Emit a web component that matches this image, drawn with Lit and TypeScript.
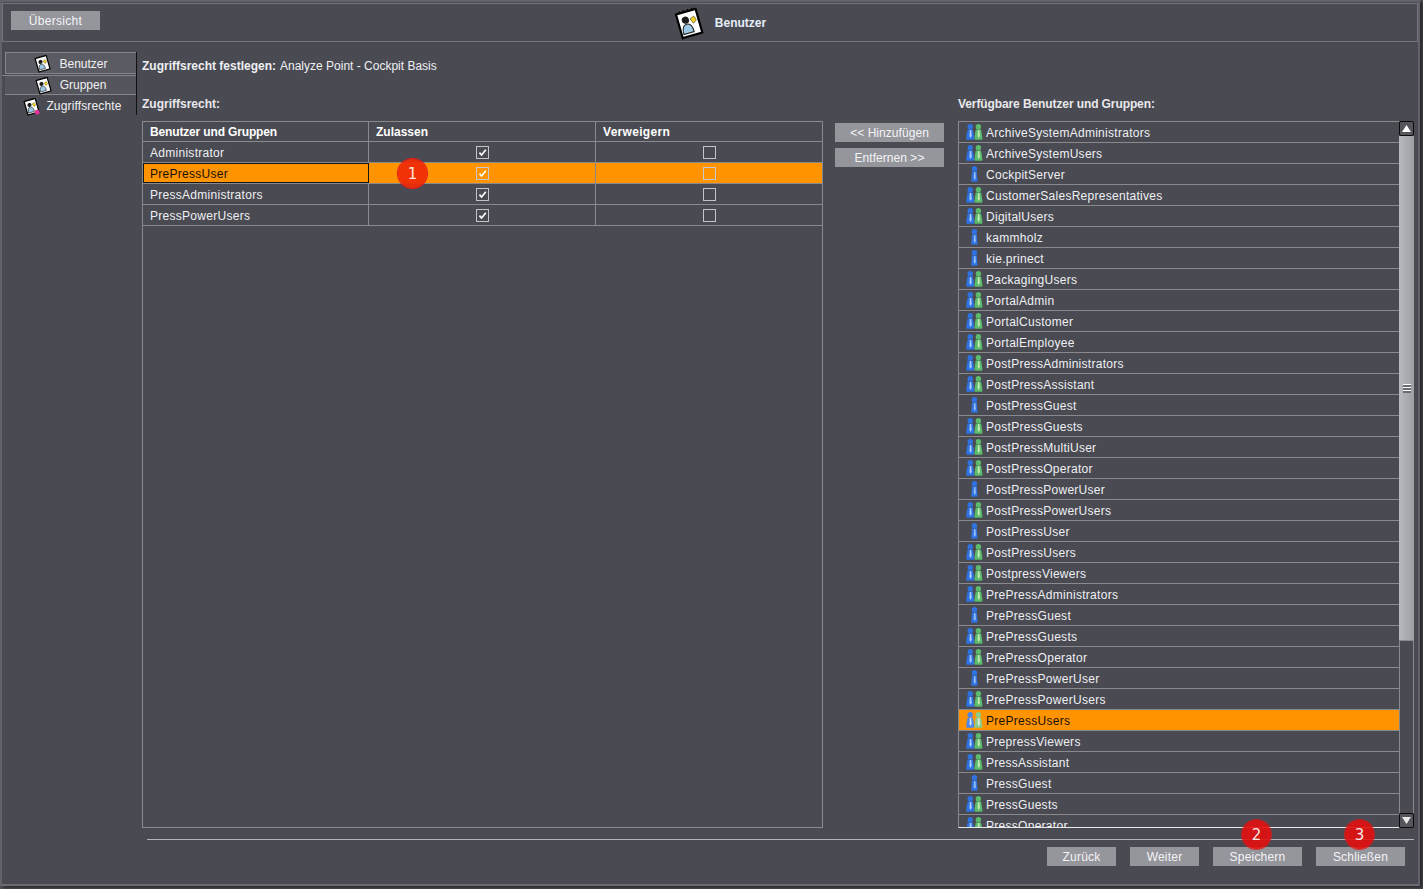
import { LitElement, html, css, svg } from "lit";
import { customElement } from "lit/decorators.js";

const G = "g", U = "u";
const ITEMS: [string, string][] = [
  ["ArchiveSystemAdministrators", G], ["ArchiveSystemUsers", G], ["CockpitServer", U],
  ["CustomerSalesRepresentatives", G], ["DigitalUsers", G], ["kammholz", U], ["kie.prinect", U],
  ["PackagingUsers", G], ["PortalAdmin", G], ["PortalCustomer", G], ["PortalEmployee", G],
  ["PostPressAdministrators", G], ["PostPressAssistant", G], ["PostPressGuest", U],
  ["PostPressGuests", G], ["PostPressMultiUser", G], ["PostPressOperator", G],
  ["PostPressPowerUser", U], ["PostPressPowerUsers", G], ["PostPressUser", U],
  ["PostPressUsers", G], ["PostpressViewers", G], ["PrePressAdministrators", G],
  ["PrePressGuest", U], ["PrePressGuests", G], ["PrePressOperator", G], ["PrePressPowerUser", U],
  ["PrePressPowerUsers", G], ["PrePressUsers", G], ["PrepressViewers", G], ["PressAssistant", G],
  ["PressGuest", U], ["PressGuests", G], ["PressOperator", G],
];

const pawn = (x: number, fill: string, light: string, w = 4) => svg`
  <circle cx=${x} cy="2.8" r="2.7" fill=${fill}/>
  <path d="M${x - 2.6} 5.4 H${x + 2.6} L${x + w - 0.5} 10 L${x + w} 14.4 Q${x + w} 15.8 ${x + w - 1} 15.8 H${x - w + 1} Q${x - w} 15.8 ${x - w} 14.4 L${x - w + 0.5} 10 Z" fill=${fill}/>
  <path d="M${x - 0.3} 6 H${x + 1} L${x + 1.5} 12 L${x + 0.4} 14 L${x - 0.8} 12 Z" fill=${light}/>`;

const groupIcon = (sel: boolean) => html`<svg class="li" width="17" height="16" viewBox="0 0 17 16">
  ${pawn(4.2, sel ? "#4d86e6" : "#2f72e2", sel ? "#cfe0f8" : "#a9cdf8")}
  ${pawn(12.4, sel ? "#8ccb8c" : "#5cbb6c", sel ? "#e2f1d0" : "#c4e8b4")}
</svg>`;
const userIcon = () => html`<svg class="li" width="17" height="16" viewBox="0 0 17 16">${pawn(8.4, "#2f72e2", "#8fbcf5", 3.2)}</svg>`;

const notepad = (size: number, dot = false) => html`<svg class="np" width=${size} height=${size} viewBox="0 0 28 28">
  <g transform="rotate(-16 14 14)">
    <rect x="4.5" y="3" width="19" height="23" fill="#fff" stroke="#000" stroke-width="2"/>
    <path d="M8 3V1M12 3V1M16 3V1M20 3V1" stroke="#000" stroke-width="1.1"/>
    <circle cx="11.5" cy="10.5" r="3.4" fill="#1c1c1c"/>
    <path d="M6.5 23c0-6 2-8.5 5-8.5s5 2.5 5 8.5z" fill="#9cc8e6" stroke="#222" stroke-width="1"/>
    <path d="M16 10.5l4-1.5 1.5 4-3.5 2.4z" fill="#f2d21e" stroke="#333" stroke-width=".5"/>
  </g>
  ${dot ? svg`<circle cx="23.5" cy="23.5" r="4" fill="#e0309a"/>` : ""}
</svg>`;

const check = (on: boolean) => html`<span class="cb">${on
  ? html`<svg width="11" height="11" viewBox="0 0 11 11"><path d="M2.4 5.6L4.6 8 8.8 2.8" fill="none" stroke="#fff" stroke-width="1.7"/></svg>`
  : ""}</span>`;

const ROWS: [string, boolean][] = [
  ["Administrator", false], ["PrePressUser", true], ["PressAdministrators", false], ["PressPowerUsers", false],
];

@customElement("app-root")
export class AppRoot extends LitElement {
  static styles = css`
    :host { display: block; width: 1423px; height: 889px; overflow: hidden; background: #505056;
      font-family: "Liberation Sans", Arial, sans-serif; font-size: 12px; color: #eef0f4; }
    * { box-sizing: border-box; }
    .np { overflow: visible; flex: none; }
    .win { position: relative; height: 886px; width: 1420px; background: #4a4a52;
      border: 2px solid #62626a; border-bottom-color: #6c6c72; display: flex; flex-direction: column;
      box-shadow: 3px 2px 3px #2a2a2e; }
    .head { height: 39px; flex: none; border: 1px solid #74747a; margin-top: 1px; display: grid;
      grid-template-columns: 1fr auto 1fr; padding-left: 8px; }
    .head .title { display: flex; align-items: center; gap: 11px; font-weight: bold; color: #e6eefa; margin-left: 12px; }
    .btn { background: #95959c; color: #f4f4f6; display: flex; align-items: center; justify-content: center;
      height: 19px; flex: none; letter-spacing: .2px; }
    .ov { width: 89px; margin-top: 7px; letter-spacing: .3px; }
    .body { flex: 1; min-height: 0; display: flex; padding-top: 10px; }
    .side { width: 135px; flex: none; padding-left: 3px; display: flex; flex-direction: column; height: 63px;
      border-right: 1px solid #111; margin-right: 5px; }
    .tab { display: flex; align-items: center; justify-content: center; gap: 8px; color: #f0f0f2; flex: none; }
    .tab.t1 { height: 22px; margin-bottom: 1px; padding-top: 1px; background: #5b5b63; border: 1px solid #85858b; border-right: 0; }
    .gline { height: 1px; margin-left: -3px; background: #85858b; flex: none; }
    .tab.t2 { height: 19px; background: #55555d; border-bottom: 1px solid #85858b; }
    .tab.t3 { height: 20px; gap: 6px; letter-spacing: .15px; padding: 2px 0 0 4px; }
    .main { flex: 1; min-width: 0; display: flex; flex-direction: column; padding-right: 4px; }
    .b { font-weight: bold; }
    .set { height: 26px; display: flex; align-items: center; gap: 4px; margin-bottom: 13px; flex: none; padding-top: 2px; }
    .lbl { height: 21px; display: flex; align-items: center; font-weight: bold; color: #e8e8ec; }
    .labels { display: grid; grid-template-columns: 816px 456px; height: 30px; padding-bottom: 4px; align-items: center; flex: none; }
    .labels .lbl:last-child { letter-spacing: -.1px; }
    .grid { flex: 1; min-height: 0; display: grid; grid-template-columns: 681px 135px 456px; }
    .table { border: 1px solid #8a8a8e; height: 707px; }
    .tr { display: grid; grid-template-columns: 226px 227px 226px; height: 21px; border-bottom: 1px solid #8a8a8e; }
    .tr > div { display: flex; align-items: center; padding-left: 7px; border-right: 1px solid #8a8a8e; }
    .tr > div:last-child { border-right: 0; }
    .tr .c { justify-content: center; padding-left: 0; }
    .tr .name { padding-top: 2px; letter-spacing: .28px; }
    .tr.h { font-weight: bold; color: #fff; height: 20px; }
    .tr.h > div:first-child { letter-spacing: -.15px; }
    .tr.h > div:last-child { letter-spacing: .3px; }
    .tr.sel { background: #ff9300; color: #16120a; }
    .tr.sel .name { border: 1px solid #161616; padding: 1px 0 0 6px; }
    .tr.sel .cb { border-color: #c9c9cc; }
    .cb { width: 13px; height: 13px; border: 1px solid #c4c4c8; display: flex; align-items: center; justify-content: center; }
    .mid { display: flex; flex-direction: column; gap: 6px; padding: 2px 0 0 12px; }
    .mid .btn { width: 109px; letter-spacing: .05px; }
    .listwrap { display: flex; height: 707px; width: 456px; }
    .list { width: 441px; flex: none; overflow: hidden; border: 1px solid #8a8a8e; border-right: 0; border-bottom-color: #e8e8e8; }
    .li-row { height: 21px; border-bottom: 1px solid #8a8a8e; display: flex; align-items: center; padding: 2px 0 0 7px; gap: 3px; letter-spacing: .28px; }
    .li-row .li { margin-top: -2px; }
    .li-row.sel { background: #ff9300; color: #16120a; }
    .li { flex: none; }
    .sb { width: 15px; flex: none; display: flex; flex-direction: column; }
    .sbb { width: 15px; height: 15px; background: #55555b; border: 1px solid #0c0c0c; border-radius: 2px; display: flex; align-items: center; justify-content: center; flex: none; }
    .thumb { height: 504px; flex: none; background: linear-gradient(90deg, #b8bac0, #9c9ea4); display: flex; align-items: center; justify-content: center; }
    .grip { width: 8px; height: 9px; background: repeating-linear-gradient(#fff 0 1px, #6a6a72 1px 3px); }
    .rest { flex: 1; border: 1px solid #8a8a8e; border-width: 1px 1px 0 1px; }
    .foot { flex: none; height: 45px; margin: 11px 4px 0 145px; border-top: 1px solid #b4b4b8; display: flex;
      justify-content: flex-end; gap: 14px; padding: 7px 9px 0 0; }
    .f1 { width: 69px; } .f2 { width: 89px; }
    .badge { position: absolute; width: 29px; height: 29px; border-radius: 50%; background: rgba(228,14,14,.9);
      box-shadow: 0 0 0 1px rgba(240,20,20,.7); color: #f8e8e8; font-family: "DejaVu Sans", sans-serif; font-size: 15px;
      display: flex; align-items: center; justify-content: center; }
    .bd1 { left: 396px; top: 157px; background: rgba(240,44,6,.94); box-shadow: 0 0 0 1px #e81818; color: #ffe9d8; }
    .bd2 { left: 1240px; top: 818px; }
    .bd3 { left: 1343px; top: 818px; }
  `;

  render() {
    return html`<div class="win">
      <div class="head">
        <div class="btn ov">Übersicht</div>
        <div class="title">${notepad(30)}<span>Benutzer</span></div>
        <div></div>
      </div>
      <div class="body">
        <div class="side">
          <div class="tab t1">${notepad(17)}<span>Benutzer</span></div>
          <div class="gline"></div>
          <div class="tab t2">${notepad(17)}<span>Gruppen</span></div>
          <div class="tab t3">${notepad(17, true)}<span>Zugriffsrechte</span></div>
        </div>
        <div class="main">
          <div class="set"><span class="b">Zugriffsrecht festlegen:</span><span>Analyze Point - Cockpit Basis</span></div>
          <div class="labels"><div class="lbl">Zugriffsrecht:</div><div class="lbl">Verfügbare Benutzer und Gruppen:</div></div>
          <div class="grid">
            <div class="table">
              <div class="tr h"><div>Benutzer und Gruppen</div><div>Zulassen</div><div>Verweigern</div></div>
              ${ROWS.map(([n, s]) => html`<div class="tr ${s ? "sel" : ""}">
                <div class="name">${n}</div><div class="c">${check(true)}</div><div class="c">${check(false)}</div></div>`)}
            </div>
            <div class="mid">
              <div class="btn">&lt;&lt; Hinzufügen</div>
              <div class="btn">Entfernen &gt;&gt;</div>
            </div>
            <div class="listwrap">
              <div class="list">
                ${ITEMS.map(([n, t]) => {
                  const sel = n === "PrePressUsers";
                  return html`<div class="li-row ${sel ? "sel" : ""}">${t === G ? groupIcon(sel) : userIcon()}<span>${n}</span></div>`;
                })}
              </div>
              <div class="sb">
                <div class="sbb"><svg width="9" height="7" viewBox="0 0 9 7"><path d="M4.5 0L9 7H0z" fill="#fff"/></svg></div>
                <div class="thumb"><div class="grip"></div></div>
                <div class="rest"></div>
                <div class="sbb"><svg width="9" height="7" viewBox="0 0 9 7"><path d="M4.5 7L9 0H0z" fill="#e8e8e8"/></svg></div>
              </div>
            </div>
          </div>
        </div>
      </div>
      <div class="foot">
        <div class="btn f1">Zurück</div><div class="btn f1">Weiter</div>
        <div class="btn f2">Speichern</div><div class="btn f2">Schließen</div>
      </div>
      <div class="badge bd1">1</div>
      <div class="badge bd2">2</div>
      <div class="badge bd3">3</div>
    </div>`;
  }
}
